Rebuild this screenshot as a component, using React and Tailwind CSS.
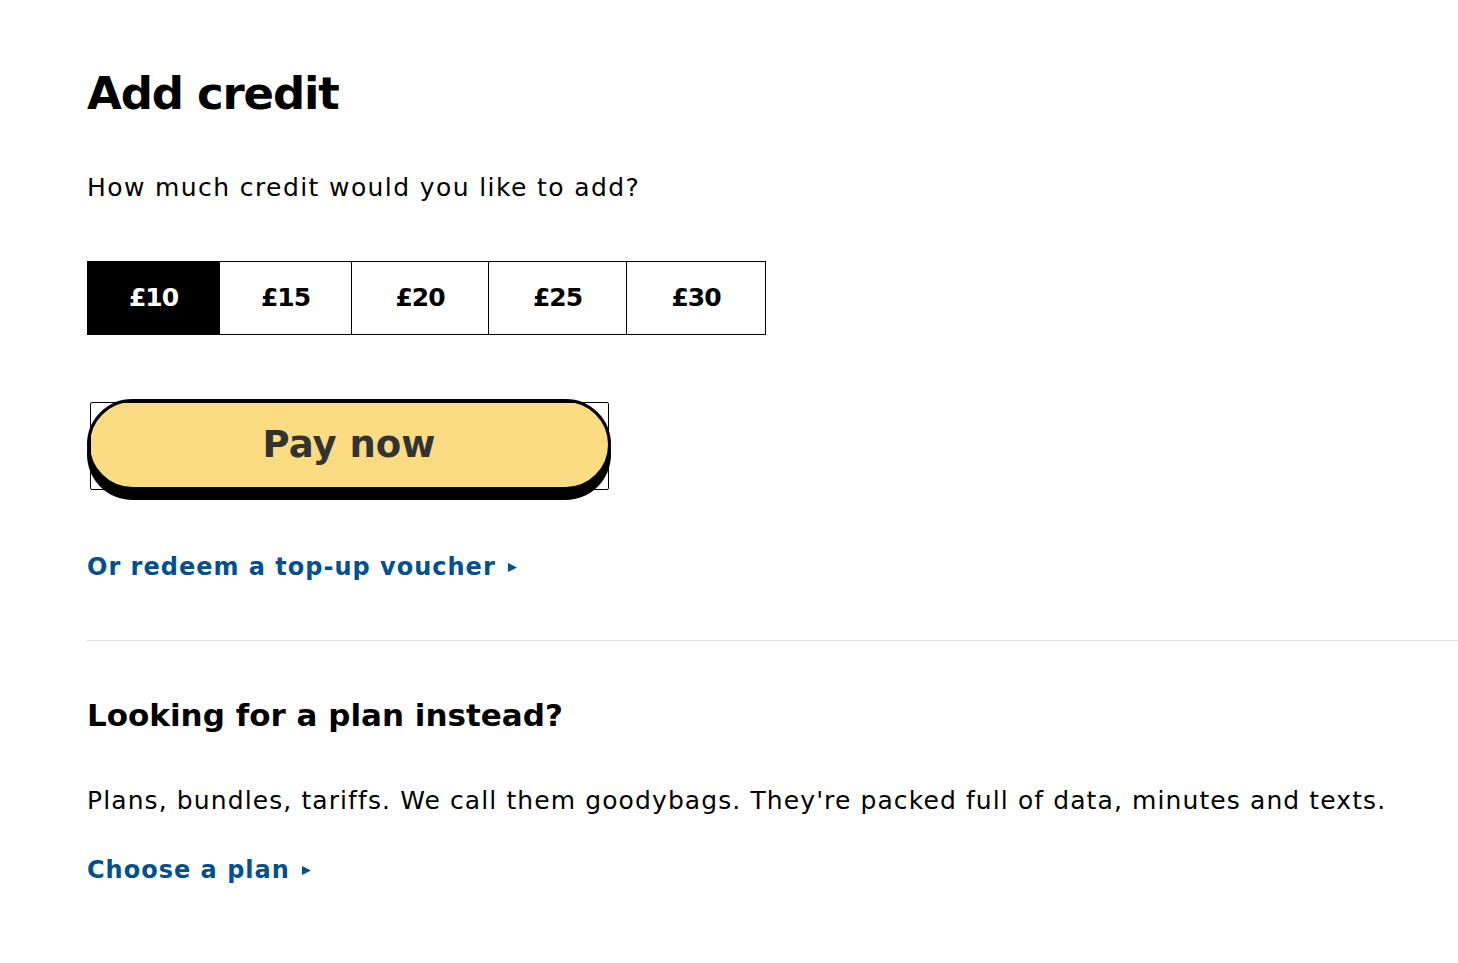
import { useState } from 'react'

const AMOUNTS = [
  { value: 10, w: 'w-[131px]' },
  { value: 15, w: 'w-[132px]' },
  { value: 20, w: 'w-[137px]' },
  { value: 25, w: 'w-[138px]' },
  { value: 30, w: 'w-[139px]' },
]

function Arrow() {
  return (
    <svg width="9" height="9" viewBox="0 0 9 9" className="ml-3 inline-block" aria-hidden="true">
      <path d="M0 0 L9 4.5 L0 9 Z" fill="#00508f" />
    </svg>
  )
}

export default function App() {
  const [amount, setAmount] = useState(10)

  return (
    <div className="min-h-screen bg-white text-black font-['DejaVu_Sans',sans-serif]">
      <div className="pl-[87px] pt-[66px]">
        <h1 className="text-[45px] leading-[56px] font-bold tracking-[-1.2px]">Add credit</h1>

        <p className="mt-[50px] text-[25px] leading-[32px] tracking-[1.4px]">How much credit would you like to add?</p>

        {/* Sélecteur de montant */}
        <div className="mt-[57px] flex w-max border border-black">
          {AMOUNTS.map((a, i) => (
            <button
              key={a.value}
              onClick={() => setAmount(a.value)}
              className={`h-[72px] ${a.w} text-[25px] font-bold tracking-[-1px] ${i > 0 ? 'border-l border-black' : ''} ${amount === a.value ? 'bg-black text-white' : 'bg-white text-black'}`}
            >
              £{a.value}
            </button>
          ))}
        </div>

        {/* Bouton payer */}
        <div className="relative mt-[64px] w-[524px] h-[101px]">
          <button className="w-full h-[91px] rounded-full border-[3px] border-black bg-[#fcdc82] shadow-[0_10px_0_#000] text-[37px] font-bold text-[#333]">
            Pay now
          </button>
          <div className="absolute left-[3px] top-[3px] w-[519px] h-[88px] border border-black rounded-[2px] pointer-events-none" />
        </div>

        <a href="#" className="mt-[51px] flex items-center text-[24px] leading-[32px] font-bold tracking-[1px] text-[#00508f]">
          Or redeem a top-up voucher <Arrow />
        </a>
      </div>

      <div className="ml-[87px] mt-[57px] border-t border-[#e2e2e2]" />

      <div className="pl-[87px]">
        <h2 className="mt-[52px] text-[31px] leading-[44px] font-bold">Looking for a plan instead?</h2>
        <p className="mt-[48px] text-[25px] leading-[32px] tracking-[1.1px]">
          Plans, bundles, tariffs. We call them goodybags. They're packed full of data, minutes and texts.
        </p>
        <a href="#" className="mt-[37px] flex items-center text-[24px] leading-[32px] font-bold tracking-[1px] text-[#00508f]">
          Choose a plan <Arrow />
        </a>
      </div>
    </div>
  )
}
